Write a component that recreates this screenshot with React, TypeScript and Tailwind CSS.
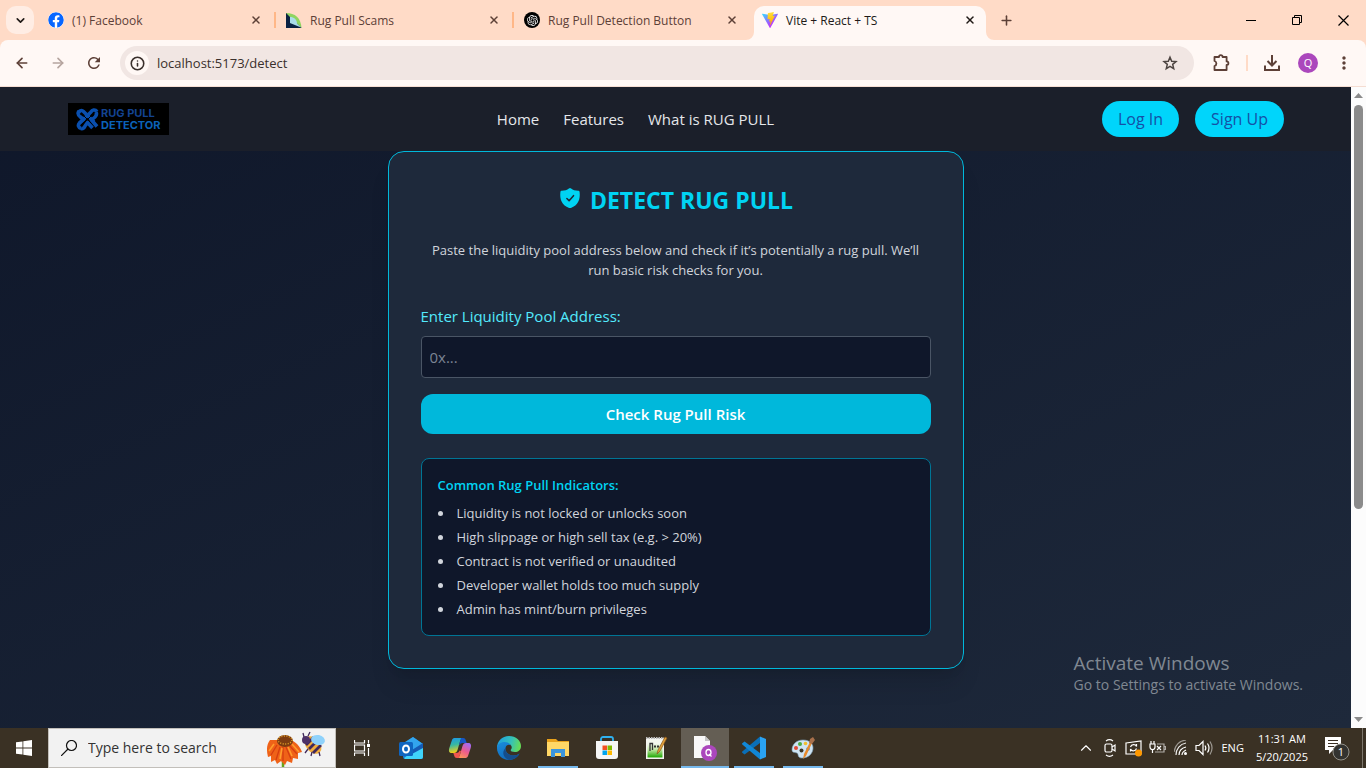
import { type ReactNode } from "react";
import { ArrowLeft, ArrowRight, ChevronDown, ChevronUp, Info, Plus, Star, X } from "lucide-react";
import { SiOpenai } from "react-icons/si";
import { FaFacebook } from "react-icons/fa";
import { MdMoreVert, MdRefresh } from "react-icons/md";

function ViteIcon() {
  return (
    <svg width="16" height="16" viewBox="0 0 256 257">
      <defs>
        <linearGradient id="va" x1="0" x2="0.6" y1="0.1" y2="0.8">
          <stop offset="0" stopColor="#41d1ff" />
          <stop offset="1" stopColor="#bd34fe" />
        </linearGradient>
        <linearGradient id="vb" x1="0.4" x2="0.5" y1="0" y2="0.9">
          <stop offset="0" stopColor="#ffea83" />
          <stop offset="0.1" stopColor="#ffdd35" />
          <stop offset="1" stopColor="#ffa800" />
        </linearGradient>
      </defs>
      <path fill="url(#va)" d="M255.2 37.9 134.9 253c-2.5 4.400-8.900 4.500-11.400 0L.9 37.900c-2.700-4.800 1.400-10.600 6.800-9.600l120.400 21.500c.8.100 1.600.1 2.300 0l117.900-21.500c5.400-1 9.600 4.800 6.900 9.600Z" />
      <path fill="url(#vb)" d="M185.400 0 96.400 17.500a3.300 3.300 0 0 0-2.600 3l-5.500 92.500a3.300 3.300 0 0 0 4 3.400l24.800-5.700c2.300-.5 4.400 1.500 3.900 3.900l-7.400 36c-.5 2.400 1.800 4.500 4.100 3.800l15.300-4.700c2.400-.7 4.600 1.400 4.100 3.900l-11.700 56.600c-.7 3.500 4 5.500 6 2.500l1.300-2 72.600-144.800c1.200-2.400-.9-5.200-3.500-4.700l-25.500 4.900c-2.400.5-4.400-1.800-3.800-4.100l16.700-57.700c.7-2.300-1.400-4.600-3.800-4.100Z" />
    </svg>
  );
}

function ScamsIcon() {
  return (
    <svg width="16" height="16" viewBox="0 0 16 16">
      <path d="M0 0h16v16H0Z" fill="#0b2440" opacity="0" />
      <path d="M0 1c9 0 15 5 15.500 15H0Z" fill="#8fd460" />
      <path d="M0 1 4 5v6l7 .5L15.500 16H0Z" fill="#0a2142" />
      <path d="M4 5c4 0 7 2.500 7 6.500L15 15.500 4 11Z" fill="#a9dcea" />
    </svg>
  );
}

function GptIcon() {
  return (
    <span className="flex size-4 items-center justify-center rounded-full bg-black text-white">
      <SiOpenai size={11} />
    </span>
  );
}

function Tab({ icon, title, divider = true }: { icon: ReactNode; title: string; divider?: boolean }) {
  return (
    <div className="flex h-10 w-[238px] shrink items-center pl-2 text-[#5d4037]">
      {icon}
      <span className="ml-2 flex-1 truncate pt-px text-xs">{title}</span>
      <button type="button" aria-label={"Close " + title} className="mr-[10px] flex size-4 items-center justify-center">
        <X size={12} strokeWidth={3} />
      </button>
      <span className={divider ? "mr-[2px] h-4 w-[2px] bg-[#ffb787]" : "mr-[2px] h-4 w-[2px]"} />
    </div>
  );
}

function TabStrip() {
  return (
    <header className="flex h-10 items-center bg-[#ffdbc7] text-[#201a17]">
      <button type="button" aria-label="Search tabs" className="ml-[6px] flex size-7 items-center justify-center rounded-[10px] bg-[#ffede4]">
        <ChevronDown size={13} strokeWidth={3} />
      </button>
      <nav aria-label="Tabs" className="ml-[6px] flex min-w-0">
        <Tab icon={<FaFacebook size={16} color="#0866ff" className="rounded-full bg-white" />} title="(1) Facebook" />
        <Tab icon={<ScamsIcon />} title="Rug Pull Scams" />
        <Tab icon={<GptIcon />} title="Rug Pull Detection Button" divider={false} />
        <div className="flex h-10 items-end">
          <svg width="8" height="8" className="-ml-2"><path d="M0 8A8 8 0 0 0 8 0V8Z" fill="#fff8f5" /></svg>
          <div className="flex h-[34px] w-[232px] items-center rounded-t-[10px] bg-[#fff8f5] pb-[6px] pl-2">
            <ViteIcon />
            <span className="ml-2 flex-1 pt-px text-xs">Vite + React + TS</span>
            <button type="button" aria-label="Close Vite + React + TS" className="mr-2 flex size-4 items-center justify-center">
              <X size={12} strokeWidth={3} />
            </button>
          </div>
          <svg width="8" height="8"><path d="M8 8A8 8 0 0 1 0 0V8Z" fill="#fff8f5" /></svg>
        </div>
      </nav>
      <button type="button" aria-label="New tab" className="flex size-6 items-center justify-center text-[#5d4037]">
        <Plus size={15} strokeWidth={2.5} />
      </button>
      <div className="ml-auto flex text-black">
        <button type="button" aria-label="Minimize" className="flex h-10 w-[46px] items-center justify-center">
          <svg width="10" height="10"><path d="M0 5.500h10" stroke="currentColor" /></svg>
        </button>
        <button type="button" aria-label="Restore" className="flex h-10 w-[46px] items-center justify-center">
          <svg width="10" height="10" fill="none" stroke="currentColor"><path d="M.5 2.500h7v7h-7ZM2.500 2.500v-2h7v7h-2" /></svg>
        </button>
        <button type="button" aria-label="Close window" className="flex h-10 w-[46px] items-center justify-center">
          <svg width="11" height="11"><path d="m.5.5 10 10M10.500.5l-10 10" stroke="currentColor" strokeWidth="1.200" /></svg>
        </button>
      </div>
    </header>
  );
}

function Toolbar() {
  return (
    <div className="bg-[#ffdbc7]">
      <div className="flex h-[47px] items-center rounded-t-lg border-b border-[#f5ddd2] bg-[#fff8f5] text-[#5d4037]">
        <button type="button" aria-label="Back" className="ml-[14px]"><ArrowLeft size={16} strokeWidth={2.500} /></button>
        <button type="button" aria-label="Forward" className="ml-5 opacity-45"><ArrowRight size={16} strokeWidth={2.500} /></button>
        <button type="button" aria-label="Reload" className="ml-[19px]"><MdRefresh size={18} /></button>
        <div className="ml-[17px] flex h-[34px] flex-1 items-center rounded-full bg-[#f1e6e3] pl-[5px] pr-4">
          <button type="button" aria-label="Site information" className="flex size-6 items-center justify-center rounded-full bg-[#fff8f5] text-[#3a302c]">
            <Info size={15} strokeWidth={2.500} />
          </button>
          <input aria-label="Address" defaultValue="localhost:5173/detect" className="ml-2 flex-1 bg-transparent pt-px text-[13px] text-[#3a302c] outline-none" />
          <button type="button" aria-label="Bookmark" className="text-[#4d4441]">
            <svg width="16" height="16" viewBox="0 0 16 16" fill="none" stroke="currentColor" strokeWidth="1.500">
              <path d="m8 2.200 1.700 4 4.300.4-3.300 2.800 1 4.300L8 11.400l-3.700 2.300 1-4.300L2 6.600l4.300-.4Z" />
            </svg>
          </button>
        </div>
        <button type="button" aria-label="Extensions" className="ml-[17px]">
          <svg width="20" height="20" viewBox="0 0 20 20" fill="none" stroke="currentColor" strokeWidth="1.800" strokeLinejoin="round">
            <path d="M3.500 4h4.500a1.800 1.800 0 0 1 3.600 0h4v4.400a1.800 1.800 0 0 1 0 3.600V17H3.500v-4a2.600 2.600 0 0 0 0-5Z" />
          </svg>
        </button>
        <span className="ml-[15px] h-4 w-[2px] bg-[#ffdbc7]" />
        <button type="button" aria-label="Downloads" className="ml-[14px]">
          <svg width="20" height="20" viewBox="0 0 20 20" fill="none" stroke="currentColor" strokeWidth="2"><path d="M10 2v10M5.500 8l4.500 4.500L14.500 8M3 12.500V17h14v-4.500" /></svg>
        </button>
        <button type="button" aria-label="Profile" className="ml-4 flex size-5 items-center justify-center rounded-full bg-[#ab47bc] text-[11px] text-white">Q</button>
        <button type="button" aria-label="Menu" className="ml-4 mr-3"><MdMoreVert size={20} /></button>
      </div>
    </div>
  );
}

function Logo() {
  return (
    <a href="#home" aria-label="Rug Pull Detector" className="flex h-8 w-[101px] items-center gap-[2px] bg-black pl-2">
      <svg width="23" height="23" viewBox="0 0 23 23" fill="none">
        <g stroke="#0a4fae" strokeWidth="3.600" strokeLinejoin="round">
          <path d="M2.500 5.500c0-2.500 3-4 5-2L18 14" />
          <path d="M21 3.500c-2-2.500-5-1.500-6 .5L3 15.500" />
          <path d="M3 3c-2 3-.5 4.500 1.500 6l3 2.500-4 3.500c-2 2-1 5 1.500 5.500" />
          <path d="M20 4c1 2 .5 3.500-1 5l-3.500 3 5.500 6.500" />
          <path d="M5 20.500c2 .5 3.500-1 4-2.500l2.500-3.500 5 5.500" />
        </g>
        <path d="m7.500 7.500 8 8M15.500 7.500l-8 8" stroke="#000" strokeWidth="1" />
      </svg>
      <span className="flex flex-col font-[Inter] text-[11px] leading-3 font-bold">
        <span className="text-[#134391]">RUG PULL</span>
        <span className="text-[#0b62b8]">DETECTOR</span>
      </span>
    </a>
  );
}

function SiteHeader() {
  return (
    <header className="flex h-16 shrink-0 items-center justify-between bg-[#1b1f2a] pl-[68px] pr-[67px]">
      <Logo />
      <nav aria-label="Site" className="flex gap-6 text-[15px] text-[#e5e7eb]">
        <a href="#home">Home</a>
        <a href="#features">Features</a>
        <a href="#about">What is RUG PULL</a>
      </nav>
      <div className="flex gap-4 text-base text-[#1550a6]">
        <button type="button" className="h-9 rounded-full bg-[#00d5fb] px-4">Log In</button>
        <button type="button" className="h-9 rounded-full bg-[#00d5fb] px-4">Sign Up</button>
      </div>
    </header>
  );
}

function ShieldIcon() {
  return (
    <svg width="24" height="24" viewBox="0 0 24 24" className="mb-1">
      <path d="M10.900 2.400a1.700 1.700 0 0 1 2.200 0c1.800 1.500 4.200 2.200 7 2.300.9 0 1.400.4 1.500 1.300.9 7.700-1.600 13.300-8.700 15.900a2.600 2.600 0 0 1-1.800 0C4 19.300 1.500 13.700 2.400 6c.1-.9.600-1.300 1.500-1.300 2.800-.1 5.200-.8 7-2.300Z" fill="currentColor" />
      <path d="m8.900 12.500 2.200 2.200 4.400-5" fill="none" stroke="#1e2939" strokeWidth="1.600" strokeLinecap="round" strokeLinejoin="round" />
    </svg>
  );
}

const indicators = [
  "Liquidity is not locked or unlocks soon",
  "High slippage or high sell tax (e.g. > 20%)",
  "Contract is not verified or unaudited",
  "Developer wallet holds too much supply",
  "Admin has mint/burn privileges",
];

function DetectCard() {
  return (
    <section className="w-full max-w-xl rounded-2xl border border-[#00b8db] bg-[#1e293b] p-8 shadow-xl">
      <h1 className="flex h-8 items-center justify-center gap-2 text-[23px] font-bold text-[#00d3f3]">
        <ShieldIcon />
        DETECT RUG PULL
      </h1>
      <p className="mt-6 text-center text-[13px] leading-5 text-[#d1d5dc]">
        Paste the liquidity pool address below and check if it’s potentially a rug pull. We’ll run basic risk checks for you.
      </p>
      <form onSubmit={(e) => e.preventDefault()}>
        <label htmlFor="pool" className="mt-6 block text-[15px] leading-6 text-[#53eafd]">Enter Liquidity Pool Address:</label>
        <input id="pool" placeholder="0x..." className="mt-2 block h-[42px] w-full rounded border border-[#4a5565] bg-[#0f172a] px-2 text-[15px] text-white placeholder:text-[#7b8494]" />
        <button type="submit" className="mt-4 block h-10 w-full rounded-xl bg-[#00b8db] text-[15px] font-semibold text-white">Check Rug Pull Risk</button>
      </form>
      <div className="mt-6 rounded-lg border border-[#007595] bg-[#0f172a] p-4 text-[13px] text-[#d1d5dc]">
        <h2 className="leading-5 font-semibold text-[#00d3f3]">Common Rug Pull Indicators:</h2>
        <ul className="mt-2 list-inside list-disc space-y-1 leading-5">
          {indicators.map((t) => <li key={t}>{t}</li>)}
        </ul>
      </div>
    </section>
  );
}

function Scrollbar() {
  return (
    <div aria-hidden="true" className="flex w-[15px] shrink-0 flex-col items-center bg-[#fcfcfc] py-[6px]">
      <svg width="9" height="5"><path d="M0 5 4.500 0 9 5Z" fill="#8b8b8b" /></svg>
      <div className="mt-[7px] flex w-[9px] flex-1 flex-col">
        <div className="h-[66%] rounded-full bg-[#8b8b8b]" />
      </div>
      <svg width="9" height="5"><path d="M0 0h9L4.500 5Z" fill="#8b8b8b" /></svg>
    </div>
  );
}

function OutlookIcon() {
  return (
    <svg width="24" height="24" viewBox="0 0 24 24">
      <path d="M4 8 14 1l10 7v13a2 2 0 0 1-2 2H6a2 2 0 0 1-2-2Z" fill="#1476d2" />
      <path d="M6 6 14 1l10 7-9 7-8-3Z" fill="#32a5ee" />
      <path d="M24 8v13a2 2 0 0 1-2 2H6l-1-1Z" fill="#3fd4fb" />
      <path d="M13 14 24 7v5l-11 6Z" fill="#155bb5" />
      <rect y="6" width="14" height="14" rx="1.500" fill="#0f65c0" />
      <ellipse cx="7" cy="13" rx="3" ry="3.600" fill="none" stroke="#fff" strokeWidth="2" />
    </svg>
  );
}

function CopilotIcon() {
  return (
    <svg width="24" height="24" viewBox="0 0 24 24">
      <defs>
        <linearGradient id="ca" x1="0" x2="0.2" y1="0" y2="1"><stop offset="0" stopColor="#1996ee" /><stop offset="0.5" stopColor="#37b8a2" /><stop offset="1" stopColor="#f4cf19" /></linearGradient>
        <linearGradient id="cb" x1="0.7" x2="0.2" y1="0" y2="1"><stop offset="0" stopColor="#a36af0" /><stop offset="0.5" stopColor="#ed5b8c" /><stop offset="1" stopColor="#fb9a55" /></linearGradient>
      </defs>
      <path d="M7 2h8c-1.700.5-2.400 1.500-3 3.500L9.500 14c-.7 2-1.500 3-3.500 3H4c-3 0-3.500-2-2.700-5L4 4c.6-1.500 1.500-2 3-2Z" fill="url(#ca)" />
      <path d="M13 2h2c2 0 2.500 1 3 3l.7 2H15c-1.500 0-2.500.5-3 1.500L11 9l1-3.500Z" fill="#1557c6" />
      <path d="M17 22H9c1.700-.5 2.400-1.500 3-3.500l2.500-8.500c.7-2 1.500-3 3.500-3h2c3 0 3.500 2 2.700 5L20 20c-.6 1.500-1.500 2-3 2Z" fill="url(#cb)" />
      <path d="M11 22H9c-2 0-2.500-1-3-3l-.7-2H8c2 0 3-.8 3.600-2.500L13 15l-1 3.500Z" fill="#f0574f" />
    </svg>
  );
}

function EdgeIcon() {
  return (
    <svg width="24" height="24" viewBox="0 0 24 24">
      <defs>
        <linearGradient id="ea" x1="0" x2="1" y1="0.2" y2="0.4"><stop offset="0" stopColor="#1c9de2" /><stop offset="0.6" stopColor="#35c1b8" /><stop offset="1" stopColor="#65dc58" /></linearGradient>
        <linearGradient id="eb" x1="0" x2="0.6" y1="0" y2="1"><stop offset="0" stopColor="#1a8ddd" /><stop offset="1" stopColor="#1067b8" /></linearGradient>
      </defs>
      <path d="M0 12C0 5 5 0 12 0s12 4.600 12 10c0 4-3 6-6 6-3.500 0-5-1.300-4-2.500 1.700-2 .5-5.500-3-5.500C7 8 3 9 0 12Z" fill="url(#ea)" />
      <path d="M0 12c0-3.500 3.500-6 7.500-6 3 0 5.500 1.500 6.500 3.500C12.500 8 9 8.500 8.500 12c-.5 4 3 7.500 8 7.500 2.500 0 4.500-1 6-2C20.500 21.500 16.500 24 12 24 5 24 0 18.500 0 12Z" fill="url(#eb)" />
      <path d="M8.500 12c-.5 4 3 7.500 8 7.500 2.500 0 4.500-1 6-2C20 22 16 23.800 12 24 7 22 4 17 8.500 12Z" fill="#154d8b" />
    </svg>
  );
}

function FolderIcon() {
  return (
    <svg width="22" height="20" viewBox="0 0 22 20">
      <path d="M0 1h9l2 2h11v15H0Z" fill="#e9a21b" />
      <path d="M0 4h22v14H0Z" fill="#ffd766" />
      <path d="M4 11h14v8h-4v-4H8v4H4Z" fill="#3b95dc" />
    </svg>
  );
}

function StoreIcon() {
  return (
    <svg width="24" height="24" viewBox="0 0 24 24">
      <path d="M6 6V3a2 2 0 0 1 2-2h8a2 2 0 0 1 2 2v3" fill="none" stroke="#2fb1ef" strokeWidth="1.800" />
      <path d="M1 5h22v15a3 3 0 0 1-3 3H4a3 3 0 0 1-3-3Z" fill="#f5f5f5" />
      <path d="M7.500 9.500H12V14H7.500Z" fill="#f25022" /><path d="M12.500 9.500H17V14h-4.500Z" fill="#7fba00" />
      <path d="M7.500 14.500H12V19H7.500Z" fill="#00a4ef" /><path d="M12.500 14.500H17V19h-4.500Z" fill="#ffb900" />
    </svg>
  );
}

function NotepadIcon() {
  return (
    <svg width="24" height="24" viewBox="0 0 24 24">
      <defs>
        <linearGradient id="np" x1="0" x2="0" y1="0" y2="1"><stop offset="0.2" stopColor="#f3f7ee" /><stop offset="0.55" stopColor="#bfe6a2" /><stop offset="0.95" stopColor="#2fae12" /></linearGradient>
      </defs>
      <path d="M2 2h18v21H2Z" fill="#f4f4f0" /><path d="M3.500 4h15v17.500h-15Z" fill="url(#np)" />
      <path d="M2 2h18" stroke="#b9b9b9" strokeWidth="2" strokeDasharray="1.500 1" />
      <path d="M6 15V7.500h2.500V14" stroke="#333" strokeWidth="1.300" fill="none" /><path d="M10 10.500h6" stroke="#333" strokeWidth="2" strokeDasharray="2 1" />
      <path d="m13 18 1-4L21 1l2 1-7 13Z" fill="#e0a03a" stroke="#8a5418" strokeWidth=".7" />
    </svg>
  );
}

function PageIcon() {
  return (
    <svg width="24" height="26" viewBox="0 0 24 26">
      <path d="M1 1h11l5 5v17H1Z" fill="#f8f8f8" /><path d="M12 1v5h5Z" fill="#c3c3c3" />
      <circle cx="16" cy="18" r="8" fill="#ab47bc" />
      <ellipse cx="15.500" cy="17.500" rx="2.500" ry="3" fill="none" stroke="#fff" strokeWidth="1.300" /><path d="m16 19 2.500 2.500" stroke="#fff" strokeWidth="1.200" />
    </svg>
  );
}

function CodeIcon() {
  return (
    <svg width="24" height="24" viewBox="0 0 24 24">
      <path d="M18 .5 24 3v18l-6 2.500Z" fill="#2aa3f3" />
      <path d="M18 .5V7L2.600 18.600.3 16.800c-.4-.4-.4-.9 0-1.200Z" fill="#0a6fb8" />
      <path d="M18 23.500V17L2.600 5.400.3 7.200c-.4.400-.4.900 0 1.200Z" fill="#1187d6" />
    </svg>
  );
}

function PaintIcon() {
  return (
    <svg width="24" height="24" viewBox="0 0 24 24">
      <path d="M12 4c6 0 10 3 10 8s-4 10-11 10c-5 0-3-4-5-5-2-.8-5 0-5-3C1 8 6 4 12 4Z" fill="#cfe4f2" stroke="#7fa6c0" strokeWidth=".6" />
      <circle cx="5" cy="12" r="2" fill="#e24a35" /><circle cx="9" cy="8" r="2" fill="#4bab44" /><circle cx="14.500" cy="7.500" r="1.800" fill="#f2be2c" /><circle cx="10.500" cy="14.500" r="2" fill="#3c3525" />
      <circle cx="17" cy="13" r="1.800" fill="#3e8ad8" />
      <path d="m12 23 1-5 6-12 2 1-6 13Z" fill="#e78a2c" /><path d="m18 7 1-4 3-2 2 3-3 4Z" fill="#a8704b" />
    </svg>
  );
}

function FlowerAndBee() {
  return (
    <svg width="62" height="38" viewBox="0 0 62 38" className="self-end">
      <path d="M18 26v12" stroke="#67a51d" strokeWidth="2.500" />
      <path d="M5 11C2 15 1 20 3 28l3-1v6l4-2 2 4 4-3 4 4 2-4 5 2 1-5 5 1v-6l4-1C36 20 33 14 26 11Z" fill="#ef6218" />
      <path d="m12 16-6 10M15 18l-4 13M18 18v14M21 18l5 12M24 16l8 9" stroke="#d63e10" strokeWidth="1.300" />
      <path d="m9 15-5 7M17 19l-2 11M23 18l4 9M27 15l7 8" stroke="#ff9c2b" strokeWidth="1.600" />
      <ellipse cx="20" cy="12" rx="8" ry="6" fill="#7d3c11" /><ellipse cx="20" cy="11" rx="7" ry="4" fill="none" stroke="#e2a127" strokeWidth="1.500" strokeDasharray="1 1.500" />
      <ellipse cx="48" cy="16" rx="10" ry="7" transform="rotate(48 48 16)" fill="#f1ad3e" />
      <path d="m41 16 8-8M44 20l9-9M48 24l8-8" stroke="#41295b" strokeWidth="2.800" />
      <circle cx="41" cy="11" r="4" fill="#4d3168" /><path d="m39 8-1-4M43 7l2-4M43 20l-3 4M47 23l-1 4M54 23l1 4" stroke="#41295b" strokeWidth="1.300" />
      <ellipse cx="53" cy="11" rx="7" ry="5" fill="#8fd2fb" transform="rotate(12 53 11)" />
    </svg>
  );
}

function TaskbarButton({ label, open = false, active = false, children }: { label: string; open?: boolean; active?: boolean; children: ReactNode }) {
  return (
    <button type="button" aria-label={label} className={active ? "flex w-12 flex-col items-center bg-[#645e54]" : "flex w-12 flex-col items-center"}>
      <span className="flex flex-1 items-center pt-[2px]">{children}</span>
      <span className={active ? "h-[2px] w-full bg-[#76b9ed]" : open ? "h-[2px] w-10 bg-[#76b9ed]" : "h-[2px]"} />
    </button>
  );
}

function Tray() {
  return (
    <div className="ml-auto flex items-center text-white">
      <button type="button" aria-label="Show hidden icons"><ChevronUp size={18} strokeWidth={1.500} /></button>
      <svg width="16" height="18" viewBox="0 0 16 18" fill="none" stroke="currentColor" strokeWidth="1.200" className="ml-2">
        <rect x="2" y="5" width="7" height="8" rx="1.500" /><path d="m9 8 3-2v6l-3-2M3 2c2-1.500 5-1.500 7 0M3 16c2 1.500 5 1.500 7 0" />
      </svg>
      <svg width="18" height="18" viewBox="0 0 18 18" fill="none" stroke="currentColor" strokeWidth="1.200" className="ml-[6px]">
        <path d="M1 4 16 2v13H1ZM5.500 8c1-3 5-3 6-.5V5M11.500 9.500c-1 3-5 3-6 .5v2.500" /><circle cx="13.500" cy="14" r="3.500" fill="#ff9800" stroke="none" />
      </svg>
      <svg width="17" height="16" viewBox="0 0 17 16" fill="none" stroke="currentColor" strokeWidth="1.200" className="ml-[6px]">
        <path d="M1 4h5v3a2.500 2.500 0 0 1-5 0ZM2 1v3M5 1v3M3.500 9v4" /><path d="M8 4h7v8H6M15 6.500h1.500v3H15" opacity=".6" /><path d="m8 6 4 4M12 6l-4 4" />
      </svg>
      <svg width="16" height="16" viewBox="0 0 16 16" fill="none" stroke="currentColor" strokeWidth="1.200" className="ml-2">
        <path d="M5 15c0-4 3-7 7-8M8 15c0-3 2-4 4-5" /><path d="M2 15C2 9 6 4 12 3" opacity=".9" /><path d="M0 12C1 6 5 1 12 0" opacity=".5" /><circle cx="11.500" cy="13.500" r="1.500" fill="currentColor" stroke="none" />
      </svg>
      <svg width="18" height="16" viewBox="0 0 18 16" fill="none" stroke="currentColor" strokeWidth="1.200" className="ml-[5px]">
        <path d="M1 5.500h3l4-4v13l-4-4H1ZM10 5.500c1 1.500 1 3.500 0 5M12.500 3.500c2 3 2 6 0 9" /><path d="M15 1.500c2.500 4 2.500 9 0 13" opacity=".5" />
      </svg>
      <span className="ml-2 text-[11px]">ENG</span>
      <div className="ml-3 text-center text-[11px] leading-[18px]"><p>11:31 AM</p><p>5/20/2025</p></div>
      <button type="button" aria-label="Notifications" className="ml-4">
        <svg width="26" height="26" viewBox="0 0 26 26">
          <path d="M1 2h16v13H9l-4 4v-4H1Z" fill="#fff" /><path d="M4 5.500h10M4 8.500h10M4 11.500h6" stroke="#3a3024" />
          <circle cx="17" cy="17" r="8" fill="#333330" stroke="#929089" />
          <text x="17" y="21" textAnchor="middle" fontSize="11" fill="#fff">1</text>
        </svg>
      </button>
      <button type="button" aria-label="Show desktop" className="ml-3 h-10 w-1 border-l border-[#7c766c]" />
    </div>
  );
}

function Taskbar() {
  return (
    <footer className="flex h-10 shrink-0 bg-[#3a3124]">
      <button type="button" aria-label="Start" className="flex w-12 items-center justify-center">
        <svg width="16" height="16" viewBox="0 0 16 16" fill="#fff"><path d="m0 2.300 6.500-.9v6.200H0ZM7.300 1.300 16 0v7.600H7.300ZM0 8.400h6.500v6.200L0 13.700ZM7.300 8.400H16V16l-8.700-1.200Z" /></svg>
      </button>
      <div className="flex w-72 items-center border border-[#c2bfba] bg-[#f2f2f2] pl-3 pr-2">
        <svg width="16" height="16" viewBox="0 0 16 16" fill="none" stroke="#111" strokeWidth="1.200"><circle cx="10.500" cy="5.500" r="5" /><path d="M7 9 0 16" /></svg>
        <input aria-label="Search" placeholder="Type here to search" className="ml-[11px] min-w-0 flex-1 bg-transparent text-sm text-black outline-none placeholder:text-[#333]" />
        <FlowerAndBee />
      </div>
      <nav aria-label="Taskbar" className="ml-0.5 flex gap-px">
        <TaskbarButton label="Task view">
          <svg width="16" height="16" viewBox="0 0 16 16" fill="none" stroke="#fff" strokeWidth="1.200"><path d="M.5 0v3h10V0M.5 16v-3h10v3M.5 5h10v6H.5ZM14.500 0v3.500M14.500 8v8" /><path d="M13 4h3v3h-3Z" fill="#fff" stroke="none" /></svg>
        </TaskbarButton>
        <TaskbarButton label="Outlook"><OutlookIcon /></TaskbarButton>
        <TaskbarButton label="Copilot"><CopilotIcon /></TaskbarButton>
        <TaskbarButton label="Edge"><EdgeIcon /></TaskbarButton>
        <TaskbarButton label="File Explorer" open><FolderIcon /></TaskbarButton>
        <TaskbarButton label="Store"><StoreIcon /></TaskbarButton>
        <TaskbarButton label="Notepad++"><NotepadIcon /></TaskbarButton>
        <TaskbarButton label="Chrome" active><PageIcon /></TaskbarButton>
        <TaskbarButton label="Visual Studio Code" open><CodeIcon /></TaskbarButton>
        <TaskbarButton label="Paint" open><PaintIcon /></TaskbarButton>
      </nav>
      <Tray />
    </footer>
  );
}

export default function App() {
  return (
    <div className="flex min-h-screen flex-col font-['Open_Sans','Noto_Sans',sans-serif]">
      <TabStrip />
      <Toolbar />
      <div className="flex flex-1">
        <div className="relative flex flex-1 flex-col bg-linear-to-br from-[#0f172a] to-[#1e293b]">
          <SiteHeader />
          <main className="flex flex-1 flex-col items-center">
            <DetectCard />
          </main>
          <div className="pointer-events-none absolute right-12 bottom-[33px] text-[#808892]">
            <p className="text-[19px] leading-6">Activate Windows</p>
            <p className="text-sm leading-5">Go to Settings to activate Windows.</p>
          </div>
        </div>
        <Scrollbar />
      </div>
      <Taskbar />
    </div>
  );
}
